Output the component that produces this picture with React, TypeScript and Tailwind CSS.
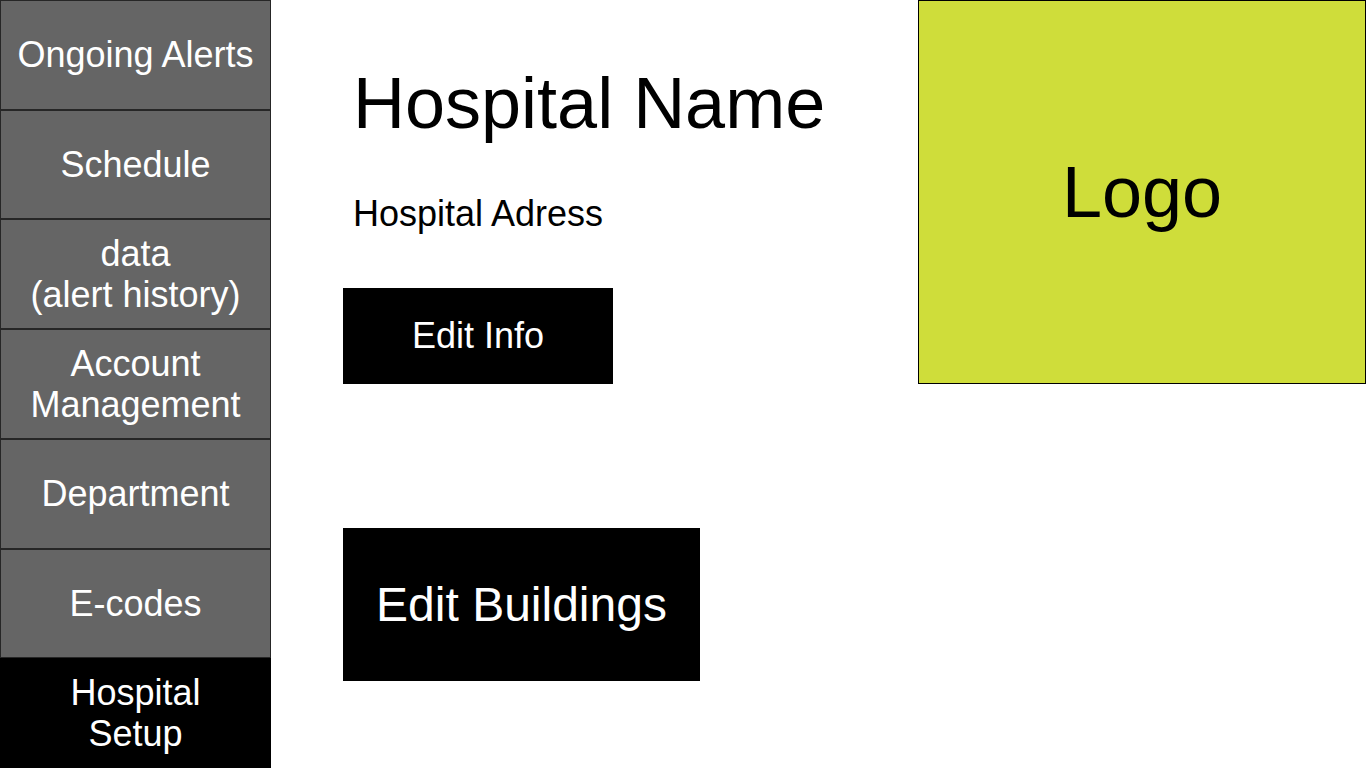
import React from "react";

const items: { label: string[]; active?: boolean }[] = [
  { label: ["Ongoing Alerts"] },
  { label: ["Schedule"] },
  { label: ["data", "(alert history)"] },
  { label: ["Account", "Management"] },
  { label: ["Department"] },
  { label: ["E-codes"] },
  { label: ["Hospital", "Setup"], active: true },
];

export default function App() {
  return (
    <div
      className="flex h-[768px] w-[1366px] overflow-hidden bg-white text-black"
      style={{ fontFamily: '"Liberation Sans", Arial, sans-serif' }}
    >
      <nav className="flex w-[271px] shrink-0 flex-col">
        {items.map((it) => (
          <div
            key={it.label.join(" ")}
            className={
              it.active
                ? "flex flex-1 flex-col items-center justify-center border border-black bg-black text-center text-[36px] leading-[41px] text-white"
                : "flex flex-1 flex-col items-center justify-center border border-[#262626] bg-[#656565] text-center text-[36px] leading-[41px] text-white"
            }
          >
            {it.label.map((l) => (
              <span key={l}>{l}</span>
            ))}
          </div>
        ))}
      </nav>
      <main className="flex flex-1">
        <div className="flex flex-1 flex-col items-start pl-[72px]">
          <h1 className="ml-[10px] mt-[67px] text-[72px] leading-none font-normal">
            Hospital Name
          </h1>
          <p className="ml-[10px] mt-[57px] text-[36px] leading-none">Hospital Adress</p>
          <button className="mt-[56px] flex h-[96px] w-[270px] items-center justify-center bg-black text-[36px] leading-none text-white">
            Edit Info
          </button>
          <button className="mt-[144px] flex h-[153px] w-[357px] items-center justify-center bg-black text-[48px] leading-none text-white">
            Edit Buildings
          </button>
        </div>
        <div className="flex h-[384px] w-[448px] shrink-0 items-center justify-center border border-black bg-[#cfdd3a] text-[72px] leading-none">
          Logo
        </div>
      </main>
    </div>
  );
}
